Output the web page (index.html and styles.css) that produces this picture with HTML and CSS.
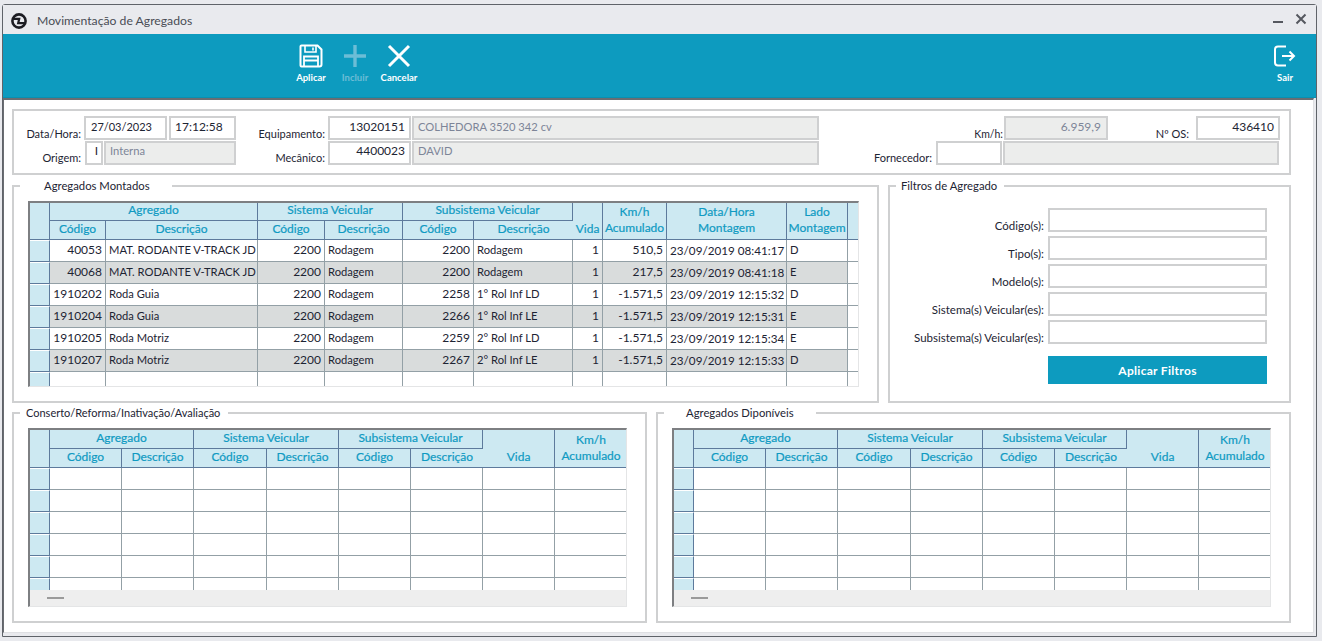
FILE: index.html
```html
<!DOCTYPE html>
<html lang="pt-BR">
<head>
<meta charset="utf-8">
<title>Movimentação de Agregados</title>
<link rel="stylesheet" href="styles.css">
</head>
<body>
<div class="window">
  <header class="titlebar">
    <svg class="logo" viewBox="0 0 18 18" width="18" height="18"><circle cx="9" cy="9" r="6.6" fill="none" stroke="#1c1c22" stroke-width="2.6"/><path d="M3.500 6.800h5.700l-1 4.400h6.300" stroke="#1c1c22" stroke-width="2.200" fill="none"/></svg>
    <span class="title">Movimentação de Agregados</span>
    <span class="winbtn min"></span>
    <svg class="winbtn-x" viewBox="0 0 12 12" width="12" height="12"><path d="M1.500 1.500l9 9M10.500 1.500l-9 9" stroke="#55585f" stroke-width="2" fill="none"/></svg>
  </header>
  <nav class="toolbar">
    <div class="tool t-save">
      <svg viewBox="0 0 24 24" width="24" height="24"><path d="M2.500 1.500h16l4 4v15a2 2 0 0 1-2 2h-18a1 1 0 0 1-1-1v-19a1 1 0 0 1 1-1z" fill="none" stroke="#fff" stroke-width="2"/><path d="M6 2v6h11V2M14 3.500v3" fill="none" stroke="#fff" stroke-width="1.600"/><path d="M5 22v-9.500h14V22M5 16.500h14" fill="none" stroke="#fff" stroke-width="1.800"/></svg>
      <span>Aplicar</span>
    </div>
    <div class="tool t-add off">
      <svg viewBox="0 0 24 24" width="24" height="24"><path d="M12 1v22M1 12h22" stroke="#6cbdd6" stroke-width="3.400" fill="none"/></svg>
      <span>Incluir</span>
    </div>
    <div class="tool t-cancel">
      <svg viewBox="0 0 24 24" width="24" height="24"><path d="M2 2l20 20M22 2L2 22" stroke="#fff" stroke-width="3" fill="none"/></svg>
      <span>Cancelar</span>
    </div>
    <div class="tool t-exit">
      <svg viewBox="0 0 24 24" width="24" height="24"><path d="M13 2.500H5a3 3 0 0 0-3 3v13a3 3 0 0 0 3 3h8" fill="none" stroke="#fff" stroke-width="2"/><path d="M9 12h12M16.500 7.500L21 12l-4.500 4.500" fill="none" stroke="#fff" stroke-width="2"/></svg>
      <span>Sair</span>
    </div>
  </nav>
  <main class="content">
    <section class="box head-box">
      <div class="frow">
        <label class="lb w-a">Data/Hora:</label>
        <span class="fld w-date">27/03/2023</span>
        <span class="fld w-time">17:12:58</span>
        <label class="lb w-b">Equipamento:</label>
        <span class="fld num w-code">13020151</span>
        <span class="fld ro w-name">COLHEDORA 3520 342 cv</span>
        <label class="lb w-c">Km/h:</label>
        <span class="fld ro num w-km">6.959,9</span>
        <label class="lb w-d">Nº OS:</label>
        <span class="fld num w-os">436410</span>
      </div>
      <div class="frow">
        <label class="lb w-a">Origem:</label>
        <span class="fld num w-i">I</span>
        <span class="fld ro w-int">Interna</span>
        <label class="lb w-b">Mecânico:</label>
        <span class="fld num w-code">4400023</span>
        <span class="fld ro w-name">DAVID</span>
        <label class="lb w-e">Fornecedor:</label>
        <span class="fld w-forn"></span>
        <span class="fld ro w-forn2"></span>
      </div>
    </section>

    <div class="mid">
      <section class="box montados">
        <h2 class="legend lg-mont">Agregados Montados</h2>
        <div class="grid grid-main">
          <table>
            <colgroup><col class="c20"><col class="c56"><col class="c152"><col class="c67"><col class="c78"><col class="c71"><col class="c99"><col class="c30"><col class="c64"><col class="c120"><col class="c61"><col class="c11"></colgroup>
            <thead>
              <tr class="h1">
                <th rowspan="2" class="corner"></th>
                <th colspan="2">Agregado</th>
                <th colspan="2">Sistema Veicular</th>
                <th colspan="2">Subsistema Veicular</th>
                <th rowspan="2" class="low">Vida</th>
                <th rowspan="2" class="two">Km/h<br>Acumulado</th>
                <th rowspan="2" class="two">Data/Hora<br>Montagem</th>
                <th rowspan="2" class="two">Lado<br>Montagem</th>
                <th rowspan="2"></th>
              </tr>
              <tr class="h2"><th>Código</th><th>Descrição</th><th>Código</th><th>Descrição</th><th>Código</th><th>Descrição</th></tr>
            </thead>
            <tbody>
              <tr><th></th><td class="r">40053</td><td>MAT. RODANTE V-TRACK JD</td><td class="r">2200</td><td>Rodagem</td><td class="r">2200</td><td>Rodagem</td><td class="r">1</td><td class="r">510,5</td><td class="dt">23/09/2019 08:41:17</td><td>D</td><td class="blank"></td></tr>
              <tr class="alt"><th></th><td class="r">40068</td><td>MAT. RODANTE V-TRACK JD</td><td class="r">2200</td><td>Rodagem</td><td class="r">2200</td><td>Rodagem</td><td class="r">1</td><td class="r">217,5</td><td class="dt">23/09/2019 08:41:18</td><td>E</td><td class="blank"></td></tr>
              <tr><th></th><td class="r">1910202</td><td>Roda Guia</td><td class="r">2200</td><td>Rodagem</td><td class="r">2258</td><td>1° Rol Inf LD</td><td class="r">1</td><td class="r">-1.571,5</td><td class="dt">23/09/2019 12:15:32</td><td>D</td><td class="blank"></td></tr>
              <tr class="alt"><th></th><td class="r">1910204</td><td>Roda Guia</td><td class="r">2200</td><td>Rodagem</td><td class="r">2266</td><td>1° Rol Inf LE</td><td class="r">1</td><td class="r">-1.571,5</td><td class="dt">23/09/2019 12:15:31</td><td>E</td><td class="blank"></td></tr>
              <tr><th></th><td class="r">1910205</td><td>Roda Motriz</td><td class="r">2200</td><td>Rodagem</td><td class="r">2259</td><td>2° Rol Inf LD</td><td class="r">1</td><td class="r">-1.571,5</td><td class="dt">23/09/2019 12:15:34</td><td>E</td><td class="blank"></td></tr>
              <tr class="alt"><th></th><td class="r">1910207</td><td>Roda Motriz</td><td class="r">2200</td><td>Rodagem</td><td class="r">2267</td><td>2° Rol Inf LE</td><td class="r">1</td><td class="r">-1.571,5</td><td class="dt">23/09/2019 12:15:33</td><td>D</td><td class="blank"></td></tr>
              <tr><th></th><td></td><td></td><td></td><td></td><td></td><td></td><td></td><td></td><td></td><td></td><td class="blank"></td></tr>
            </tbody>
          </table>
        </div>
      </section>

      <section class="box filtros">
        <h2 class="legend lg-filt">Filtros de Agregado</h2>
        <div class="filter-row"><label class="lb">Código(s):</label><span class="fld ffld"></span></div>
        <div class="filter-row"><label class="lb">Tipo(s):</label><span class="fld ffld"></span></div>
        <div class="filter-row"><label class="lb">Modelo(s):</label><span class="fld ffld"></span></div>
        <div class="filter-row"><label class="lb">Sistema(s) Veicular(es):</label><span class="fld ffld"></span></div>
        <div class="filter-row"><label class="lb">Subsistema(s) Veicular(es):</label><span class="fld ffld"></span></div>
        <button class="apply" type="button">Aplicar Filtros</button>
      </section>
    </div>

    <div class="bottom">
      <section class="box lower">
        <h2 class="legend lg-cons">Conserto/Reforma/Inativação/Avaliação</h2>
        <div class="grid grid-low">
          <div class="clip">
          <table>
            <colgroup><col class="c20"><col class="c72"><col class="c72"><col class="c73"><col class="c72"><col class="c72"><col class="c72"><col class="c72"><col class="c72"></colgroup>
            <thead>
              <tr class="h1 eq"><th rowspan="2" class="corner"></th><th colspan="2">Agregado</th><th colspan="2">Sistema Veicular</th><th colspan="2">Subsistema Veicular</th><th rowspan="2" class="low">Vida</th><th rowspan="2" class="two">Km/h<br>Acumulado</th></tr>
              <tr class="h2"><th>Código</th><th>Descrição</th><th>Código</th><th>Descrição</th><th>Código</th><th>Descrição</th></tr>
            </thead>
            <tbody>
              <tr><th></th><td></td><td></td><td></td><td></td><td></td><td></td><td></td><td class="last"></td></tr>
              <tr><th></th><td></td><td></td><td></td><td></td><td></td><td></td><td></td><td class="last"></td></tr>
              <tr><th></th><td></td><td></td><td></td><td></td><td></td><td></td><td></td><td class="last"></td></tr>
              <tr><th></th><td></td><td></td><td></td><td></td><td></td><td></td><td></td><td class="last"></td></tr>
              <tr><th></th><td></td><td></td><td></td><td></td><td></td><td></td><td></td><td class="last"></td></tr>
              <tr><th></th><td></td><td></td><td></td><td></td><td></td><td></td><td></td><td class="last"></td></tr>
            </tbody>
          </table>
          </div>
          <div class="hscroll"><span class="thumb"></span></div>
        </div>
      </section>

      <section class="box lower">
        <h2 class="legend lg-disp">Agregados Diponíveis</h2>
        <div class="grid grid-low">
          <div class="clip">
          <table>
            <colgroup><col class="c20"><col class="c72"><col class="c72"><col class="c73"><col class="c72"><col class="c72"><col class="c72"><col class="c72"><col class="c72"></colgroup>
            <thead>
              <tr class="h1 eq"><th rowspan="2" class="corner"></th><th colspan="2">Agregado</th><th colspan="2">Sistema Veicular</th><th colspan="2">Subsistema Veicular</th><th rowspan="2" class="low">Vida</th><th rowspan="2" class="two">Km/h<br>Acumulado</th></tr>
              <tr class="h2"><th>Código</th><th>Descrição</th><th>Código</th><th>Descrição</th><th>Código</th><th>Descrição</th></tr>
            </thead>
            <tbody>
              <tr><th></th><td></td><td></td><td></td><td></td><td></td><td></td><td></td><td class="last"></td></tr>
              <tr><th></th><td></td><td></td><td></td><td></td><td></td><td></td><td></td><td class="last"></td></tr>
              <tr><th></th><td></td><td></td><td></td><td></td><td></td><td></td><td></td><td class="last"></td></tr>
              <tr><th></th><td></td><td></td><td></td><td></td><td></td><td></td><td></td><td class="last"></td></tr>
              <tr><th></th><td></td><td></td><td></td><td></td><td></td><td></td><td></td><td class="last"></td></tr>
              <tr><th></th><td></td><td></td><td></td><td></td><td></td><td></td><td></td><td class="last"></td></tr>
            </tbody>
          </table>
          </div>
          <div class="hscroll"><span class="thumb"></span></div>
        </div>
      </section>
    </div>
  </main>
</div>
</body>
</html>
```

FILE: styles.css
```css
* { box-sizing: border-box; }
html, body { margin: 0; height: 641px; overflow: hidden; }
body {
  background: #e9eaee;
  font-family: "Lato", "Noto Sans", sans-serif;
  font-size: 11px;
  color: #1d2433;
  padding: 4px 5px 4px 2px;
}
.window {
  width: 1315px;
  height: 633px;
  border: 1px solid #5f6369;
  border-radius: 3px 3px 0 0;
  background: #e9eaee;
  display: flex;
  flex-direction: column;
}
.titlebar {
  height: 29px;
  flex: none;
  display: flex;
  align-items: center;
  padding: 2px 0 0 7px;
  background: #e9eaee;
}
.logo { flex: none; }
.title { margin-left: 9px; font-size: 12.200px; color: #4a4d55; }
.winbtn.min { margin-left: auto; width: 10px; height: 2px; background: #55585f; margin-top: 2px; }
.winbtn-x { margin: -4px 9px 0 12px; }
.toolbar {
  height: 64px;
  flex: none;
  background: #0d9bbf;
  display: flex;
  align-items: flex-start;
  border-bottom: 1px solid #0a8fb0;
}
.tool {
  width: 44px;
  padding-top: 10px;
  display: flex;
  flex-direction: column;
  align-items: center;
  gap: 4px;
  color: #fff;
  font-size: 9.500px;
  font-weight: 700;
  line-height: 12px;
}
.tool.off { color: #6cbdd6; }
.t-save { margin-left: 286px; }
.t-exit { margin-left: auto; margin-right: 9px; }
.content {
  flex: 1;
  margin: 0 2px 3px 0;
  padding: 9px 8px 0;
  background: #fff;
  border-top: 2px solid #6a6d72;
  border-left: 1px solid #6a6d72;
  border-right: 1px solid #dfe0e3;
  border-bottom: 1px solid #dfe0e3;
  display: flex;
  flex-direction: column;
}
.box {
  position: relative;
  border: 2px solid #cfd0d1;
  background: #fff;
}
.head-box {
  width: 1279px;
  height: 66px;
  display: flex;
  flex-direction: column;
  padding-top: 5px;
  gap: 1px;
}
.frow { display: flex; align-items: stretch; height: 24px; }
.lb {
  text-align: right;
  align-self: flex-end;
  line-height: 16px;
  padding-right: 3px;
  margin-bottom: -1px;
  flex: none;
  white-space: nowrap;
}
.frow:first-child .lb { margin-bottom: -2px; }
.fld {
  height: 24px;
  border: 2px solid #cfd0d1;
  background: #fff;
  flex: none;
  line-height: 17px;
  padding: 0 4px;
  margin-right: 1px;
  font-size: 12px;
  white-space: nowrap;
}
.frow + .frow .fld { line-height: 16px; }
.fld.num { text-align: right; }
.fld.ro { background: #ecedec; color: #7d8598; font-size: 11.200px; }
.fld.ro.num { font-size: 12px; padding-right: 5px; }
.w-a { width: 70px; }
.w-date { width: 83px; margin-right: 2px; font-size: 11px; padding-left: 5px; }
.w-time { width: 67px; }
.w-i { width: 18px; padding: 0 3px; margin-left: 1px; }
.w-int { width: 132px; }
.w-b { width: 91px; }
.w-code { width: 83px; }
.w-name { width: 407px; margin-right: 0; }
.lb.w-c { width: 185px; font-size: 10.500px; padding-right: 1px; }
.w-km { width: 104px; }
.lb.w-d { width: 87px; padding-right: 7px; }
.w-os { width: 84px; }
.lb.w-e { width: 117px; padding-right: 4px; }
.w-forn { width: 66px; }
.w-forn2 { width: 276px; }
.mid { display: flex; gap: 9px; margin-top: 10px; height: 218px; }
.bottom { display: flex; gap: 9px; margin-top: 9px; height: 211px; }
.legend {
  position: absolute;
  top: -9px;
  margin: 0;
  background: #fff;
  font-size: 11.300px;
  font-weight: 400;
  line-height: 16px;
  color: #1d2433;
  white-space: nowrap;
}
.lg-mont { left: 6px; width: 152px; padding-left: 24px; }
.lg-filt { left: 6px; width: 108px; padding-left: 5px; }
.lg-cons { left: 6px; width: 208px; padding-left: 6px; font-size: 11px; }
.lg-disp { left: 6px; width: 152px; padding-left: 22px; }
.montados { width: 867px; padding: 14px 0 0 14px; }
.filtros { width: 403px; padding: 21px 22px 0 0; display: flex; flex-direction: column; gap: 4px; align-items: stretch; }
.lower { width: 635px; padding: 14px 0 0 14px; }
.filter-row { display: flex; height: 24px; justify-content: flex-end; }
.filter-row .lb { padding-right: 4px; line-height: 14px; margin-bottom: -1px; font-size: 11.500px; }
.ffld { width: 219px; margin: 0 0 0 0; }
.apply {
  width: 219px;
  height: 28px;
  margin: 8px 0 0 auto;
  border: 0;
  background: #0d9bbf;
  color: #fff;
  font-family: "Lato", sans-serif;
  font-weight: 700;
  font-size: 12px;
  letter-spacing: .3px;
}
.grid {
  border-top: 2px solid #7d7f82;
  border-left: 2px solid #7d7f82;
  border-right: 1px solid #e4e5e6;
  border-bottom: 1px solid #e4e5e6;
  overflow: hidden;
  background: #fff;
}
.grid-main { width: 831px; height: 186px; }
.grid-low { width: 599px; height: 179px; display: flex; flex-direction: column; }
.clip { height: 160px; flex: none; overflow: hidden; }
table { border-collapse: separate; border-spacing: 0; table-layout: fixed; }
.grid-main table { width: 829px; }
.grid-low table { width: 597px; }
.c11 { width: 11px; } .c20 { width: 20px; } .c30 { width: 30px; } .c56 { width: 56px; } .c61 { width: 61px; }
.c64 { width: 64px; } .c67 { width: 67px; } .c71 { width: 71px; } .c72 { width: 72px; } .c73 { width: 73px; }
.c78 { width: 78px; } .c99 { width: 99px; } .c120 { width: 120px; } .c152 { width: 152px; }
th, td { padding: 0; overflow: hidden; white-space: nowrap; font-size: 11.200px; }
thead th {
  background: #cde9f2;
  color: #0f9ac2;
  font-size: 12px;
  font-weight: 400;
  -webkit-text-stroke: .2px #0f9ac2;
  text-align: center;
  border-right: 1px solid #5d7a9c;
  border-bottom: 1px solid #5d7a9c;
  line-height: 14px;
  padding: 0 0 3px;
}
thead th:last-child { border-right: 0; }
.h1 th { height: 18px; }
.h1.eq th { height: 19px; }
.h2 th { height: 19px; }
.h1 th.low { vertical-align: bottom; padding-bottom: 3px; }
.h1 th.two { line-height: 16px; vertical-align: middle; padding-bottom: 2px; }
tbody th {
  background: #cde9f2;
  border-right: 1px solid #5d7a9c;
  border-bottom: 1px solid #5d7a9c;
  border-top: 1px solid #fff;
  height: 22px;
}
tbody td {
  height: 22px;
  padding: 0 3px 2px;
  line-height: 14px;
  color: #1d2433;
  border-right: 1px solid #93a0a6;
  border-bottom: 1px solid #93a0a6;
}
tbody td.r { text-align: right; font-size: 12px; }
tbody td.dt { font-size: 11.700px; }
tbody td.last, tbody td.blank { border-right: 0; }
tbody tr.alt td { background: #d9dcdc; }
tbody tr.alt td.blank { background: #fff; }
.hscroll { height: 16px; flex: none; background: #eeeeee; padding: 7px 0 0 17px; }
.thumb { display: block; width: 17px; height: 2px; background: #9a9a9a; }
```
